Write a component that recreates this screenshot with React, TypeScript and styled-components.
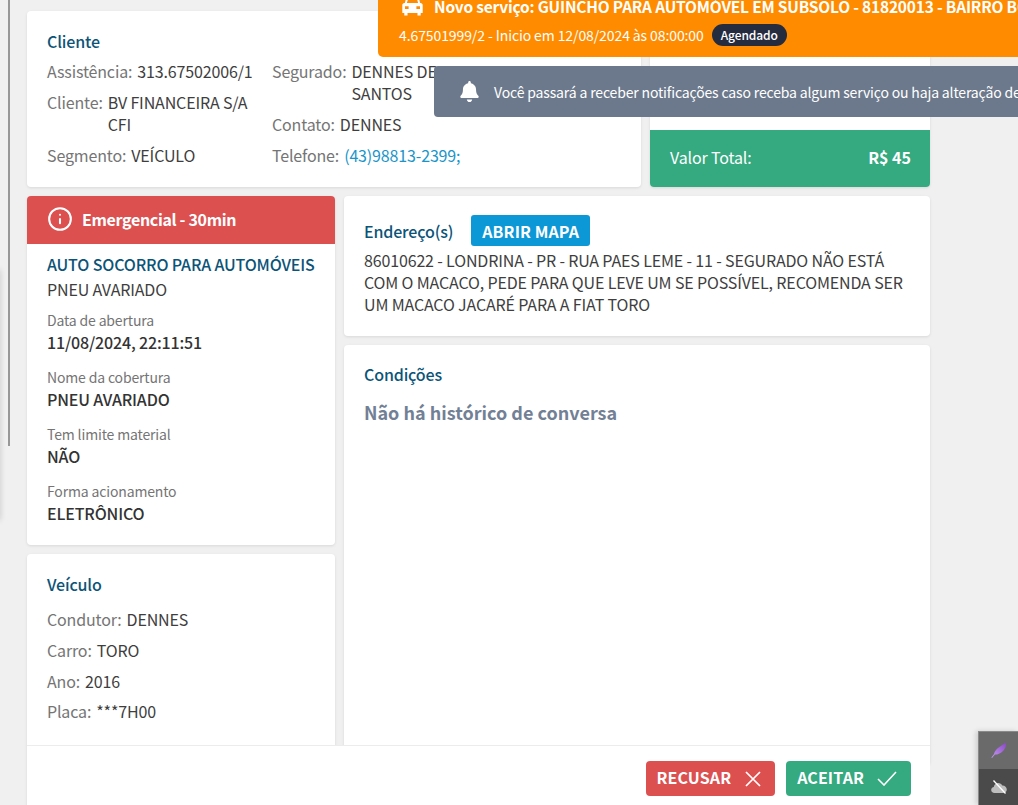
import React from "react";
import styled, { createGlobalStyle } from "styled-components";
import { Info } from "lucide-react";
import { FaBell } from "react-icons/fa";

const Global = createGlobalStyle`
  html, body { margin: 0; padding: 0; height: 100%; overflow: hidden; background: #f0f0f0; }
  body { font-family: "Noto Sans CJK SC", "Noto Sans", sans-serif; color: #3a3a3a; letter-spacing: -0.15px; }
  * { box-sizing: border-box; }
  svg { flex-shrink: 0; }
`;

const Page = styled.div`
  position: relative;
  width: 1018px;
  height: 805px;
  overflow: hidden;
  background: #f0f0f0;
`;
const ScrollMark = styled.div`
  position: absolute;
  left: 8px;
  top: 0;
  width: 2px;
  height: 446px;
  background: #979797;
`;
const SideShadow = styled.div`
  position: absolute;
  left: -6px;
  top: 270px;
  width: 6px;
  height: 250px;
  box-shadow: 0 0 6px rgba(0, 0, 0, 0.18);
`;
const Sheet = styled.div`
  position: absolute;
  left: 27px;
  top: 11px;
  width: 903px;
  display: grid;
  grid-template-columns: 308px 1fr;
  column-gap: 9px;
  row-gap: 9px;
`;
const TopRow = styled.div`
  grid-column: 1 / 3;
  display: grid;
  grid-template-columns: 614px 280px;
  column-gap: 9px;
  height: 176px;
`;
const Card = styled.section`
  background: #fff;
  border-radius: 4px;
  box-shadow: 0 1px 3px rgba(0, 0, 0, 0.1);
  overflow: hidden;
`;
const ClientCard = styled(Card)`
  padding: 19px 20px 0;
`;
const Title = styled.h3`
  margin: 0;
  font-size: 16px;
  line-height: 22px;
  font-weight: 500;
  color: #0b5478;
`;
const ClientGrid = styled.div`
  display: grid;
  grid-template-columns: 225px 1fr;
  margin-top: 8px;
`;
const Col = styled.div`
  display: flex;
  flex-direction: column;
  gap: 9px;
`;
const Line = styled.div`
  display: flex;
  font-size: 16px;
  line-height: 22px;
  color: #3e3e3e;
`;
const Key = styled.span`
  color: #757575;
  margin-right: 5px;
  white-space: nowrap;
`;
const Val = styled.span<{ $link?: boolean }>`
  color: ${(p) => (p.$link ? "#1b95c9" : "#3e3e3e")};
`;
const TotalCard = styled(Card)`
  display: flex;
  flex-direction: column;
  justify-content: flex-end;
`;
const TotalBar = styled.div`
  height: 57px;
  background: #35a97f;
  color: #fff;
  display: flex;
  align-items: center;
  justify-content: space-between;
  padding: 0 19px 4px 20px;
  font-size: 16px;
`;
const TotalValue = styled.strong`
  font-weight: 700;
  letter-spacing: 0;
`;
const LeftCol = styled.div`
  display: flex;
  flex-direction: column;
  gap: 9px;
`;
const RightCol = styled.div`
  display: flex;
  flex-direction: column;
  gap: 9px;
`;
const Emergency = styled.div`
  height: 48px;
  background: #dc5050;
  color: #fff;
  display: flex;
  align-items: center;
  gap: 9px;
  padding: 0 20px 2px;
  font-size: 16px;
  font-weight: 700;
  letter-spacing: -0.33px;
`;
const ServiceBody = styled.div`
  padding: 9px 20px 20px;
  height: 301px;
`;
const ServiceTitle = styled.div`
  font-size: 16px;
  line-height: 22px;
  font-weight: 500;
  color: #0b5478;
  white-space: nowrap;
`;
const ServiceSub = styled.div`
  font-size: 16px;
  line-height: 22px;
  margin: 3px 0 -4px;
  color: #3e3e3e;
`;
const Field = styled.div`
  margin-top: 14px;
`;
const FieldLabel = styled.div`
  font-size: 14px;
  line-height: 20px;
  color: #757575;
`;
const FieldValue = styled.div`
  font-size: 16px;
  line-height: 22px;
  margin-top: 1px;
  font-weight: 500;
  color: #333;
`;
const VehicleCard = styled(Card)`
  padding: 19px 20px 0;
  height: 260px;
`;
const VehicleList = styled.div`
  display: flex;
  flex-direction: column;
  gap: 8.75px;
  margin-top: 13px;
`;
const AddressCard = styled(Card)`
  padding: 19px 20px 0;
  height: 140px;
`;
const AddressHead = styled.div`
  display: flex;
  align-items: center;
  gap: 18px;
`;
const MapButton = styled.button`
  height: 31px;
  border: 0;
  border-radius: 3px;
  padding: 0 11px;
  background: #0c97d6;
  color: #fff;
  font: 700 16px "Noto Sans CJK SC", sans-serif;
  letter-spacing: 0.1px;
`;
const AddressText = styled.p`
  margin: 3px 0 0;
  font-size: 16px;
  line-height: 22px;
  color: #3e3e3e;
`;
const ConditionsCard = styled(Card)`
  padding: 18px 20px 0;
  height: 420px;
`;
const EmptyText = styled.div`
  margin-top: 13px;
  font-size: 18px;
  line-height: 28px;
  font-weight: 700;
  letter-spacing: 0;
  color: #728095;
`;
const Footer = styled.footer`
  position: absolute;
  left: 27px;
  top: 745px;
  width: 903px;
  height: 60px;
  background: #fff;
  border-top: 1px solid #ececec;
  display: flex;
  justify-content: flex-end;
  align-items: flex-start;
  gap: 11px;
  padding: 15px 19px 0 0;
`;
const ActionButton = styled.button<{ $accept?: boolean }>`
  height: 35px;
  border: 0;
  border-radius: 4px;
  padding: 0 14px 3px 11px;
  display: flex;
  align-items: center;
  gap: ${(p) => (p.$accept ? "13px" : "14px")};
  color: #fff;
  background: ${(p) => (p.$accept ? "#35a97f" : "#dc5050")};
  font: 700 16px "Noto Sans CJK SC", sans-serif;
  letter-spacing: 0.1px;
  svg { margin-top: 3px; }
`;
const OrangeToast = styled.div`
  position: absolute;
  left: 378px;
  top: 0;
  width: 640px;
  height: 57px;
  background: #ff8c00;
  color: #fff;
  border-radius: 0 0 0 5px;
  padding-left: 21px;
  white-space: nowrap;
  overflow: hidden;
`;
const ToastHead = styled.div`
  height: 12px;
  display: flex;
  align-items: center;
  gap: 11px;
  padding-left: 3px;
  font-size: 15.5px;
  font-weight: 700;
  line-height: 12px;
  letter-spacing: -0.2px;
`;
const ToastSub = styled.div`
  margin-top: 12px;
  display: flex;
  align-items: center;
  gap: 8px;
  font-size: 14px;
  line-height: 22px;
  letter-spacing: -0.1px;
`;
const Badge = styled.span`
  background: #262c40;
  color: #fff;
  font-size: 12px;
  font-weight: 500;
  line-height: 22px;
  letter-spacing: -0.1px;
  padding: 0 9px;
  border-radius: 11px;
`;
const GrayToast = styled.div`
  position: absolute;
  left: 434px;
  top: 66px;
  width: 584px;
  height: 51px;
  background: #6c798c;
  color: #fff;
  border-radius: 4px 0 0 4px;
  display: flex;
  align-items: center;
  gap: 14px;
  padding-left: 25px;
  font-size: 14px;
  white-space: nowrap;
  overflow: hidden;
`;
const Dock = styled.div`
  position: absolute;
  left: 978px;
  top: 731px;
  width: 40px;
  height: 74px;
  background: #4a4a4a;
  border: 1px solid #8a8a8a;
  border-right: 0;
  border-bottom: 0;
  box-shadow: -2px 0 5px rgba(0, 0, 0, 0.15);
  display: flex;
  flex-direction: column;
`;
const DockItem = styled.div<{ $active?: boolean }>`
  height: 38px;
  display: flex;
  align-items: center;
  justify-content: center;
  background: ${(p) => (p.$active ? "#6a6a6a" : "transparent")};
`;

const CarIcon = () => (
  <svg width="21" height="24" viewBox="0 0 21 24" style={{ marginTop: -3 }} aria-hidden="true">
    <path d="M3.6 11 5.2 5.2C5.5 4 6.4 3.2 7.6 3.2h5.8c1.2 0 2.1.8 2.4 2L17.4 11" fill="none" stroke="#fff" strokeWidth="2" />
    <path
      fillRule="evenodd"
      fill="#fff"
      d="M2.4 10h16.2c1.2 0 2.1 1 2.1 2.1V20h-2v2.4h-3.2V20H5.5v2.4H2.3V20h-2v-7.900C.3 11 1.200 10 2.400 10ZM3 13.200v2.800h3.600v-2.800H3Zm11.400 0v2.800H18v-2.800h-3.600Z"
    />
  </svg>
);
const CrossIcon = () => (
  <svg width="16" height="16" viewBox="0 0 16 16" aria-hidden="true">
    <path d="M1 1 15 15M15 1 1 15" stroke="#fff" strokeWidth="1.7" fill="none" />
  </svg>
);
const CheckIcon = () => (
  <svg width="20" height="15" viewBox="0 0 20 15" aria-hidden="true">
    <path d="M1 8 7 14 19 1" stroke="#fff" strokeWidth="1.6" fill="none" />
  </svg>
);
const FeatherIcon = () => (
  <svg width="16" height="17" viewBox="0 0 16 17" aria-hidden="true">
    <defs>
      <linearGradient id="quill" x1="0" y1="1" x2="1" y2="0">
        <stop offset="0" stopColor="#c59bf0" />
        <stop offset="1" stopColor="#8a45c8" />
      </linearGradient>
    </defs>
    <path d="M15.300 .5C15.300 4 14 7.600 11 10 8.800 11.800 6 12.800 4 12.500L1 16 .4 15.500 3 12C3.400 9.800 5.200 7.300 8 5.300 10.300 3.600 13 2 15.300 .5Z" fill="url(#quill)" />
  </svg>
);
const CloudSlashIcon = () => (
  <svg width="16" height="14" viewBox="0 0 16 14" aria-hidden="true">
    <path d="M3.500 13C1.500 13 .2 11.600.2 10 .2 8.400 1.400 7.300 2.800 7.100 3 4.800 4.800 3 7.200 3 9 3 10.600 4 11.300 5.500 13.800 5.400 15.800 7.200 15.800 9.400 15.800 11.500 14.200 13 12 13H3.500Z" fill="#bdbdbd" />
    <path d="M2.500.5 14.500 13.500" stroke="#fff" strokeWidth="1.300" fill="none" />
  </svg>
);

export default function App() {
  return (
    <Page>
      <Global />
      <SideShadow />
      <ScrollMark />
      <Sheet>
        <TopRow>
          <ClientCard>
            <Title>Cliente</Title>
            <ClientGrid>
              <Col>
                <Line><Key>Assistência:</Key><Val>313.67502006/1</Val></Line>
                <Line><Key>Cliente:</Key><Val>BV FINANCEIRA S/A CFI</Val></Line>
                <Line><Key>Segmento:</Key><Val>VEÍCULO</Val></Line>
              </Col>
              <Col>
                <Line><Key>Segurado:</Key><Val>DENNES DE OLIVEIRA<br />SANTOS</Val></Line>
                <Line><Key>Contato:</Key><Val>DENNES</Val></Line>
                <Line><Key>Telefone:</Key><Val $link>(43)98813-2399;</Val></Line>
              </Col>
            </ClientGrid>
          </ClientCard>
          <TotalCard>
            <TotalBar>
              <span>Valor Total:</span>
              <TotalValue>R$ 45</TotalValue>
            </TotalBar>
          </TotalCard>
        </TopRow>
        <LeftCol>
          <Card>
            <Emergency>
              <Info size={26} strokeWidth={1.9} />
              Emergencial - 30min
            </Emergency>
            <ServiceBody>
              <ServiceTitle>AUTO SOCORRO PARA AUTOMÓVEIS</ServiceTitle>
              <ServiceSub>PNEU AVARIADO</ServiceSub>
              <Field><FieldLabel>Data de abertura</FieldLabel><FieldValue>11/08/2024, 22:11:51</FieldValue></Field>
              <Field><FieldLabel>Nome da cobertura</FieldLabel><FieldValue>PNEU AVARIADO</FieldValue></Field>
              <Field><FieldLabel>Tem limite material</FieldLabel><FieldValue>NÃO</FieldValue></Field>
              <Field><FieldLabel>Forma acionamento</FieldLabel><FieldValue>ELETRÔNICO</FieldValue></Field>
            </ServiceBody>
          </Card>
          <VehicleCard>
            <Title>Veículo</Title>
            <VehicleList>
              <Line><Key>Condutor:</Key><Val>DENNES</Val></Line>
              <Line><Key>Carro:</Key><Val>TORO</Val></Line>
              <Line><Key>Ano:</Key><Val>2016</Val></Line>
              <Line><Key>Placa:</Key><Val>***7H00</Val></Line>
            </VehicleList>
          </VehicleCard>
        </LeftCol>
        <RightCol>
          <AddressCard>
            <AddressHead>
              <Title>Endereço(s)</Title>
              <MapButton>ABRIR MAPA</MapButton>
            </AddressHead>
            <AddressText>
              86010622 - LONDRINA - PR - RUA PAES LEME - 11 - SEGURADO NÃO ESTÁ COM O MACACO, PEDE PARA QUE LEVE UM SE POSSÍVEL, RECOMENDA SER UM MACACO JACARÉ PARA A FIAT TORO
            </AddressText>
          </AddressCard>
          <ConditionsCard>
            <Title>Condições</Title>
            <EmptyText>Não há histórico de conversa</EmptyText>
          </ConditionsCard>
        </RightCol>
      </Sheet>
      <Footer>
        <ActionButton>RECUSAR <CrossIcon /></ActionButton>
        <ActionButton $accept>ACEITAR <CheckIcon /></ActionButton>
      </Footer>
      <OrangeToast>
        <ToastHead>
          <CarIcon />
          Novo serviço: GUINCHO PARA AUTOMÓVEL EM SUBSOLO - 81820013 - BAIRRO BOQUEIRÃO
        </ToastHead>
        <ToastSub>
          4.67501999/2 - Inicio em 12/08/2024 às 08:00:00
          <Badge>Agendado</Badge>
        </ToastSub>
      </OrangeToast>
      <GrayToast>
        <FaBell size={21} />
        Você passará a receber notificações caso receba algum serviço ou haja alteração de status
      </GrayToast>
      <Dock>
        <DockItem $active><FeatherIcon /></DockItem>
        <DockItem><CloudSlashIcon /></DockItem>
      </Dock>
    </Page>
  );
}
